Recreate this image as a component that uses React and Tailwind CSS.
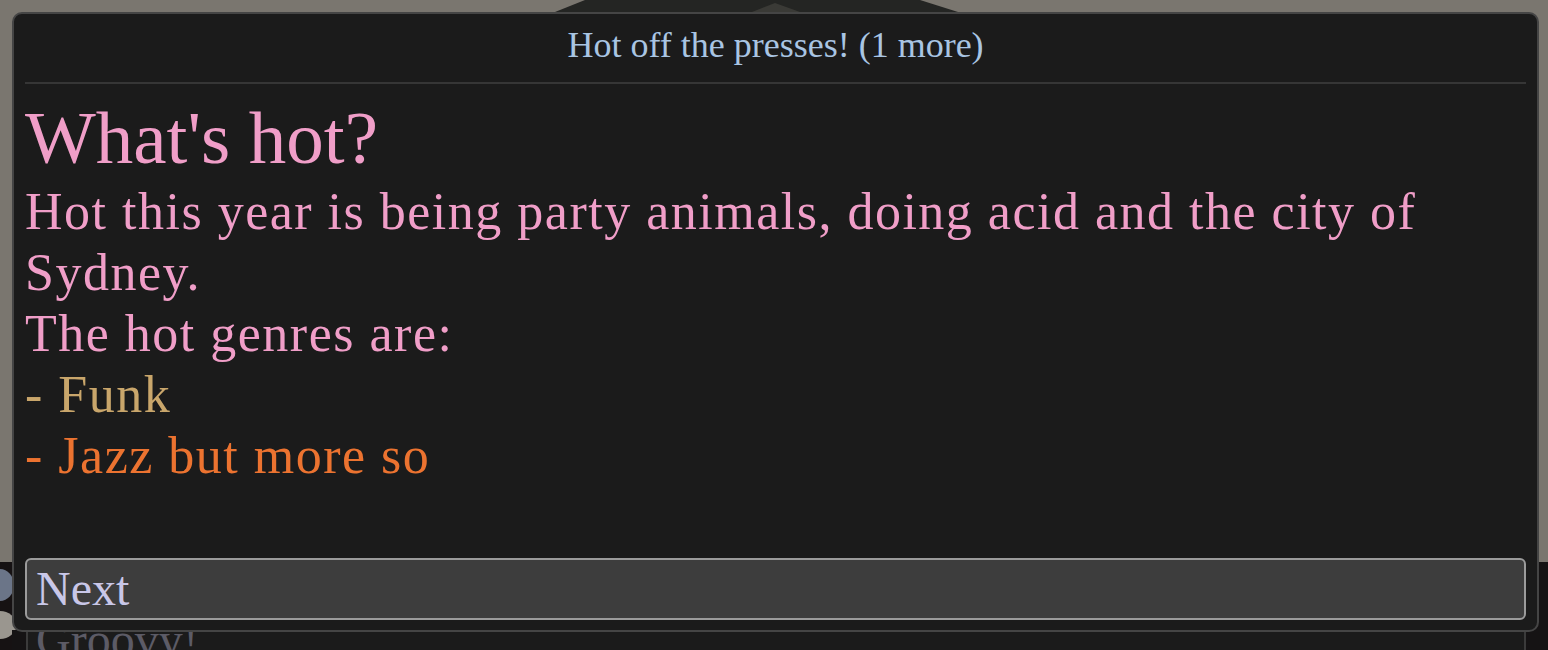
import React from "react";

const genres = [
  { name: "Funk", color: "text-[#c9a66b]" },
  { name: "Jazz but more so", color: "text-[#ec7330]" },
];

const App = () => {
  return (
    <div className="relative w-[1548px] h-[650px] overflow-hidden bg-[#7a766f] font-['Liberation_Serif',serif]">
      {/* scene behind the dialog */}
      <svg className="absolute left-0 top-0" width="1548" height="650">
        <polygon points="555,12 585,0 920,0 958,12" fill="#242523" />
        <polygon points="752,12 775,3 800,12" fill="#3a3a36" />
        <rect x="0" y="562" width="12" height="88" fill="#161213" />
        <ellipse cx="0" cy="585" rx="14" ry="16" fill="#6b7588" />
        <ellipse cx="0" cy="625" rx="16" ry="14" fill="#9a968f" />
        <rect x="12" y="630" width="1536" height="20" fill="#151314" />
        <rect x="1527" y="562" width="21" height="88" fill="#151314" />
      </svg>
      <div className="absolute left-[26px] top-[600px] w-[1500px] h-[60px] border-x-2 border-[#3b3b3b] bg-[#1b1b1b] px-[8px]">
        <span className="block pt-[10px] text-[48px] leading-[60px] text-[#5c5b66]">Groovy!</span>
      </div>

      {/* dialog */}
      <div className="absolute left-[12px] top-[12px] w-[1527px] h-[620px] flex flex-col rounded-[10px] border-2 border-[#454545] bg-[#1b1b1b] px-[11px] pb-[10px]">
        <div className="h-[70px] shrink-0 flex items-center justify-center border-b-2 border-[#363636] pb-[6px]">
          <span className="text-[36px] text-[#a9c5e3]">Hot off the presses! (1 more)</span>
        </div>

        <div className="flex-1 pt-[16px] text-[#f09ec8]">
          <h1 className="text-[75px] leading-[76px]">What's hot?</h1>
          <div className="mt-[5px] text-[52px] leading-[61px] tracking-[1.5px]">
            <p>Hot this year is being party animals, doing acid and the city of Sydney.</p>
            <p>The hot genres are:</p>
            {genres.map((g) => (
              <p key={g.name} className={g.color}>
                - {g.name}
              </p>
            ))}
          </div>
        </div>

        <button className="h-[62px] shrink-0 flex items-center rounded-[6px] border-2 border-[#9b9b9b] bg-[#3d3d3d] px-[9px] text-left text-[48px] text-[#c9c7e8]">
          Next
        </button>
      </div>
    </div>
  );
};

export default App;
